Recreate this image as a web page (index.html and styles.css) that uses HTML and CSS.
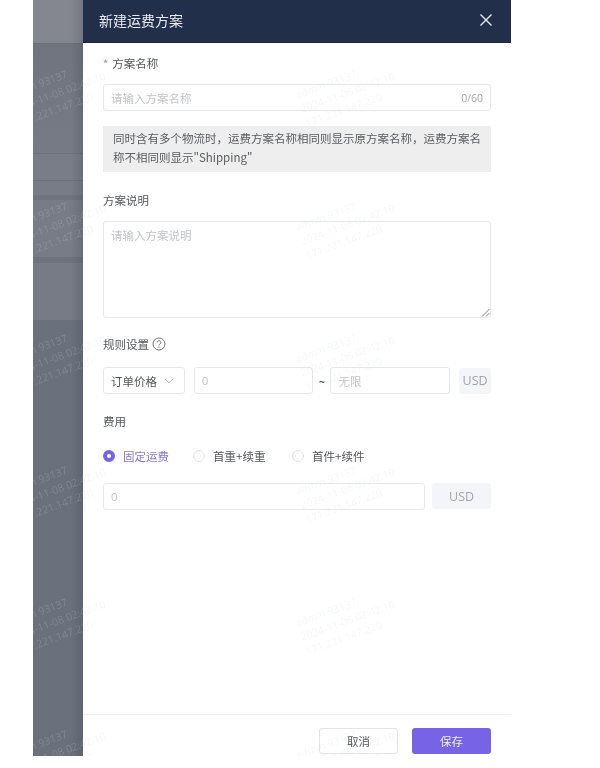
FILE: index.html
```html
<!DOCTYPE html>
<html lang="zh">
<head>
<meta charset="utf-8">
<title>新建运费方案</title>
<link rel="stylesheet" href="styles.css">
</head>
<body>
<div class="shot">
  <div class="backdrop">
    <div class="band band-a"></div>
    <div class="band band-b"></div>
    <div class="band band-c"></div>
    <div class="band band-d"></div>
    <div class="band band-dark"></div>
    <div class="band band-e"></div>
    <div class="band band-dark2"></div>
    <div class="band band-f"></div>
    <div class="band band-j"></div>
    <div class="edge"></div>
  </div>
  <section class="drawer">
    <header class="head">
      <h1 class="title">新建运费方案</h1>
      <svg class="close" width="14" height="14" viewBox="0 0 14 14"><path d="M1.5 1.5l11 11M12.5 1.5l-11 11" stroke="#e8eaf0" stroke-width="1.4" fill="none"/></svg>
    </header>
    <div class="body">
      <label class="label label-first"><span class="req">*</span>方案名称</label>
      <div class="input input-name"><span class="ph">请输入方案名称</span><span class="count">0/60</span></div>
      <div class="note">同时含有多个物流时，运费方案名称相同则显示原方案名称，运费方案名称不相同则显示"Shipping"</div>
      <label class="label label-desc">方案说明</label>
      <div class="area"><span class="ph">请输入方案说明</span>
        <svg class="grip" width="9" height="9" viewBox="0 0 9 9"><path d="M1 8.5L8.5 1M5 8.5L8.5 5" stroke="#777" stroke-width="0.9" fill="none"/></svg>
      </div>
      <div class="label label-rule">规则设置
        <svg class="help" width="14" height="14" viewBox="0 0 14 14"><circle cx="7" cy="7" r="6" fill="none" stroke="#666" stroke-width="0.9"/><path d="M5.2 5.5a1.8 1.8 0 1 1 2.8 1.5c-.7.4-1 .8-1 1.5" fill="none" stroke="#666" stroke-width="0.9"/><circle cx="7" cy="10.2" r=".6" fill="#666"/></svg>
      </div>
      <div class="rule-row">
        <div class="input select"><span>订单价格</span>
          <svg width="10" height="6" viewBox="0 0 10 6"><path d="M1 1l4 4 4-4" fill="none" stroke="#c4c6ca" stroke-width="1"/></svg>
        </div>
        <div class="input min"><span class="ph">0</span></div>
        <span class="tilde">~</span>
        <div class="input max"><span class="ph">无限</span></div>
        <div class="unit unit-small">USD</div>
      </div>
      <label class="label label-fee">费用</label>
      <div class="radios">
        <span class="radio radio-on"><i class="dot"></i>固定运费</span>
        <span class="radio"><i class="dot"></i>首重+续重</span>
        <span class="radio"><i class="dot"></i>首件+续件</span>
      </div>
      <div class="fee-row">
        <div class="input fee"><span class="ph">0</span></div>
        <div class="unit unit-large">USD</div>
      </div>
    </div>
    <footer class="foot">
      <button class="btn btn-cancel">取消</button>
      <button class="btn btn-save">保存</button>
    </footer>
  </section>
  <div class="marks">
    <div class="mark">admin 93137<br>2024-11-08 02:42:10<br>171.221.147.220</div>
    <div class="mark">admin 93137<br>2024-11-08 02:42:10<br>171.221.147.220</div>
    <div class="mark">admin 93137<br>2024-11-08 02:42:10<br>171.221.147.220</div>
    <div class="mark">admin 93137<br>2024-11-08 02:42:10<br>171.221.147.220</div>
    <div class="mark">admin 93137<br>2024-11-08 02:42:10<br>171.221.147.220</div>
    <div class="mark">admin 93137<br>2024-11-08 02:42:10<br>171.221.147.220</div>
    <div class="mark">admin 93137<br>2024-11-08 02:42:10<br>171.221.147.220</div>
    <div class="mark">admin 93137<br>2024-11-08 02:42:10<br>171.221.147.220</div>
    <div class="mark">admin 93137<br>2024-11-08 02:42:10<br>171.221.147.220</div>
    <div class="mark">admin 93137<br>2024-11-08 02:42:10<br>171.221.147.220</div>
    <div class="mark">admin 93137<br>2024-11-08 02:42:10<br>171.221.147.220</div>
    <div class="mark">admin 93137<br>2024-11-08 02:42:10<br>171.221.147.220</div>
  </div>
</div>
</body>
</html>
```
FILE: styles.css
```css
* { box-sizing: border-box; }
html, body { margin: 0; background: #fff; }
body { font-family: "Noto Sans CJK SC", "Noto Sans", sans-serif; color: #55575c; height: 768px; overflow: hidden; }
.shot { position: relative; display: flex; width: 478px; height: 756px; margin-left: 33px; overflow: hidden; filter: blur(0.3px); }

.backdrop { position: relative; width: 50px; flex: none; display: flex; flex-direction: column; background: #6b727d; }
.band { flex: none; }
.band-a { height: 43px; background: #84878f; }
.band-b { height: 110px; background: linear-gradient(#6f747e, #777b85); border-top: 1px solid #6b6f79; }
.band-c { height: 27px; background: #797d87; border-top: 1px solid #6d717b; }
.band-d { height: 15px; background: #787c86; border-top: 1px solid #6d717b; }
.band-dark { height: 5px; background: #70747e; }
.band-e { height: 57px; background: #787c86; }
.band-dark2 { height: 6px; background: #6f737d; }
.band-f { height: 57px; background: #777b85; }
.band-j { flex: 1; background: #6a717c; }
.edge { position: absolute; top: 0; right: 0; bottom: 0; width: 12px; background: linear-gradient(90deg, rgba(50,50,60,0), rgba(50,50,60,.2)); }

.drawer { width: 428px; flex: none; display: flex; flex-direction: column; background: #fff; }
.head { height: 43px; flex: none; display: flex; align-items: center; justify-content: space-between; padding: 0 18px 2px 16px; background: #222f4b; border-bottom: 1px solid #1c2740; }
.title { margin: 0; font-size: 14px; font-weight: 400; color: #e9ebef; }
.body { flex: 1; padding: 0 20px; display: flex; flex-direction: column; }

.label { display: flex; align-items: center; font-size: 11.5px; line-height: 16px; color: #55575c; }
.label-first { margin-top: 12px; }
.label-desc { margin-top: 20px; }
.label-rule { margin-top: 18px; }
.label-fee { margin-top: 19px; }
.req { color: #e56b6b; margin-right: 4px; font-size: 11px; }
.help { margin-left: 3px; }

.input { display: flex; align-items: center; height: 27px; padding: 0 7px; background: #fff; border: 1px solid #e6e7ea; border-radius: 3px; font-size: 11.5px; }
.ph { color: #c4c5c8; }
.input-name { margin-top: 13px; justify-content: space-between; }
.count { color: #a5a6a9; font-size: 10.5px; font-family: "Open Sans", sans-serif; }
.note { margin-top: 15px; padding: 3px 10px; height: 46px; background: #eeeeee; color: #5b5d62; font-size: 11.5px; line-height: 19px; }
.area { position: relative; margin-top: 13px; height: 97px; padding: 5px 7px; border: 1px solid #e6e7ea; border-radius: 3px; font-size: 11.5px; }
.grip { position: absolute; right: 0; bottom: 0; }

.rule-row { display: flex; align-items: center; margin-top: 15px; }
.select { width: 82px; justify-content: space-between; color: #55575c; padding-right: 10px; }
.min { width: 120px; margin-left: 9px; font-family: "Open Sans", sans-serif; }
.tilde { width: 17px; text-align: center; font-size: 11px; font-weight: 700; color: #55575c; }
.max { width: 120px; }
.unit { display: flex; align-items: center; justify-content: center; height: 26px; background: #f4f5f8; color: #a0a3a9; font-size: 12.5px; border-radius: 3px; font-family: "Open Sans", sans-serif; }
.unit-small { width: 32px; margin-left: 9px; }
.unit-large { width: 59px; margin-left: 7px; }

.radios { display: flex; margin-top: 19px; height: 16px; font-size: 11.5px; }
.radio { display: flex; align-items: center; color: #55575c; }
.radio:nth-child(1) { width: 90px; }
.radio:nth-child(2) { width: 99px; }
.dot { width: 12px; height: 12px; margin-right: 8px; border-radius: 50%; border: 1px solid #e4e5e8; background: #fff; }
.radio-on { color: #8d77d8; }
.radio-on .dot { border: 4px solid #7763e6; }

.fee-row { display: flex; margin-top: 19px; }
.fee { width: 323px; font-family: "Open Sans", sans-serif; }

.foot { height: 42px; flex: none; display: flex; justify-content: flex-end; align-items: flex-start; gap: 14px; padding: 13px 20px 0 0; border-top: 1px solid #f1f1f3; }
.btn { width: 79px; height: 26px; padding: 0; border-radius: 3px; font-family: inherit; font-size: 11.5px; }
.btn-cancel { background: #fff; border: 1px solid #e2e3e6; color: #55575c; }
.btn-save { background: #7763e6; border: none; color: #f1eefc; }

.marks { position: absolute; top: 70px; left: -23px; display: grid; grid-template-columns: 289px 289px; grid-auto-rows: 132px; pointer-events: none; }
.mark { font-size: 10.5px; line-height: 15px; color: rgba(212,215,222,.2); transform: rotate(-20deg); transform-origin: 50px 25px; white-space: nowrap; font-family: "Open Sans", sans-serif; }
```
